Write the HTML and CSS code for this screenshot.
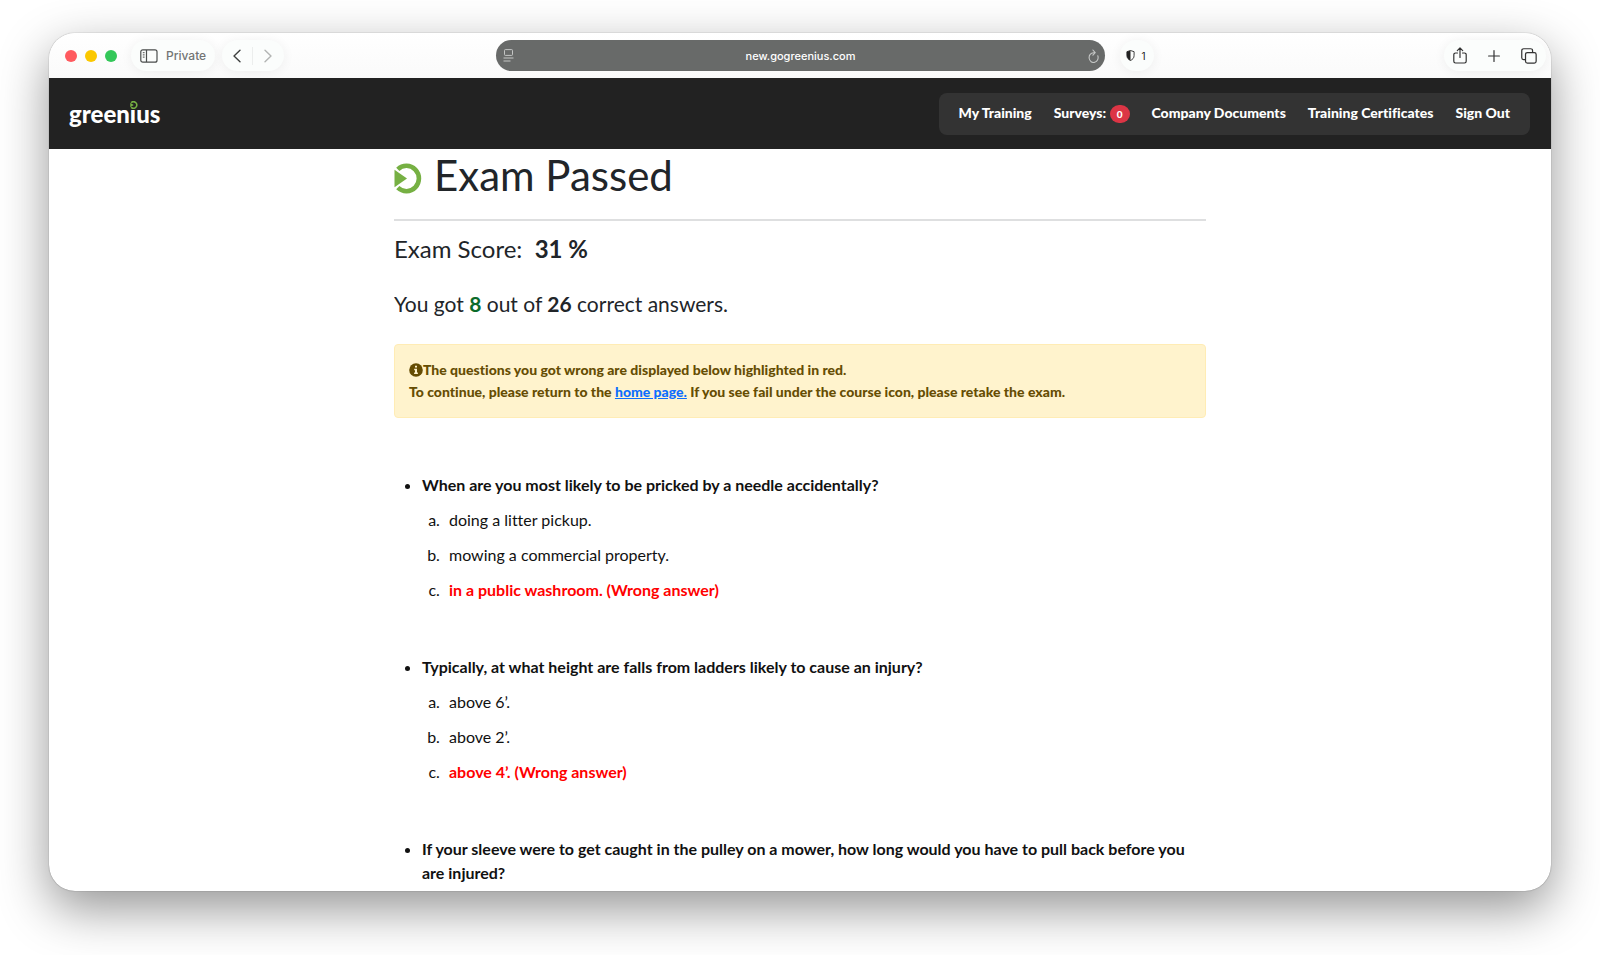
FILE: index.html
```html
<!DOCTYPE html>
<html lang="en">
<head>
<meta charset="utf-8">
<title>Greenius – Exam Passed</title>
<link rel="stylesheet" href="styles.css">
</head>
<body>
<div class="window">
  <div class="toolbar">
    <div class="toolbar-left">
      <div class="lights"><span class="light red"></span><span class="light yellow"></span><span class="light green"></span></div>
      <button class="pill private" type="button">
        <svg width="18" height="14" viewBox="0 0 18 14" fill="none" stroke="#4b4d4c" stroke-width="1.2"><rect x=".8" y=".8" width="16.2" height="12.4" rx="2"/><path d="M6.5 1v12"/><path d="M2.8 3.7h1.8M2.8 5.9h1.8M2.8 8.1h1.8" stroke-width="1"/></svg>
        <span>Private</span>
      </button>
      <div class="pill history">
        <button type="button" aria-label="Back"><svg width="8" height="14" viewBox="0 0 8 14" fill="none" stroke="#3f4140" stroke-width="1.4" stroke-linecap="round" stroke-linejoin="round"><path d="M7 1.2 1 7l6 5.8"/></svg></button>
        <span class="divider"></span>
        <button type="button" aria-label="Forward"><svg width="8" height="14" viewBox="0 0 8 14" fill="none" stroke="#b3b5b4" stroke-width="1.4" stroke-linecap="round" stroke-linejoin="round"><path d="m1 1.2 6 5.8-6 5.8"/></svg></button>
      </div>
    </div>
    <div class="address">
      <button type="button" aria-label="Reader"><svg width="11" height="13" viewBox="0 0 11 13" fill="none" stroke="#c4c6c5" stroke-width="1"><rect x="1.5" y=".6" width="8" height="5.8" rx=".8"/><path d="M.5 9h10M.5 12h7"/></svg></button>
      <input type="text" aria-label="Address" value="new.gogreenius.com">
      <button type="button" aria-label="Reload"><svg width="11" height="14" viewBox="0 0 11 14" fill="none" stroke="#c4c6c5" stroke-width="1.1" stroke-linecap="round" stroke-linejoin="round"><path d="M9.800 6.800A4.500 4.900 0 1 1 5.500 3.700H7M4.900 1l2.300 2.700L4.900 6.200"/></svg></button>
    </div>
    <div class="toolbar-right">
      <button class="pill shield" type="button"><svg width="9" height="11" viewBox="0 0 10 11" preserveAspectRatio="none"><path d="M5 .5 9 1.700V5.500c0 2.500-1.700 4-4 5-2.300-1-4-2.500-4-5V1.700z" fill="none" stroke="#222" stroke-width=".9"/><path d="M5 .5v10c-2.300-1-4-2.500-4-5V1.700z" fill="#222"/></svg><span>1</span></button>
      <div class="pill actions">
        <button type="button" aria-label="Share"><svg width="14" height="17" viewBox="0 0 14 17" fill="none" stroke="#333" stroke-width="1.2" stroke-linecap="round" stroke-linejoin="round"><path d="M4.500 6H2.500A1.700 1.700 0 0 0 .8 7.700v6.600A1.700 1.700 0 0 0 2.500 16h9a1.700 1.700 0 0 0 1.700-1.700V7.700A1.700 1.700 0 0 0 11.500 6h-2M7 10.500V1M4.300 3.600 7 .9l2.700 2.700"/></svg></button>
        <button type="button" aria-label="New tab"><svg width="12" height="12" viewBox="0 0 12 12" stroke="#333" stroke-width="1.200" stroke-linecap="round"><path d="M6 .6v10.800M.6 6h10.800"/></svg></button>
        <button type="button" aria-label="Tab overview"><svg width="16" height="16" viewBox="0 0 17 17" fill="none" stroke="#333" stroke-width="1.300" stroke-linejoin="round"><rect x="4.800" y="4.800" width="11.300" height="11.300" rx="2"/><path d="M12.300 4.500V2.800a2 2 0 0 0-2-2H2.800a2 2 0 0 0-2 2v7.500a2 2 0 0 0 2 2h1.700"/></svg></button>
      </div>
    </div>
  </div>

  <header class="site-header">
    <a class="logo" href="#" aria-label="greenius">green<span class="logo-i">ı<svg class="logo-dot" width="8" height="8" viewBox="0 0 30 30"><path d="M4 6A13 12 0 1 1 4 24" fill="none" stroke="#76b043" stroke-width="6"/><path d="M1 7l13 8L1 23z" fill="#76b043"/></svg></span>us</a>
    <nav class="site-nav">
      <a href="#">My Training</a>
      <a href="#">Surveys: <span class="badge">0</span></a>
      <a href="#">Company Documents</a>
      <a href="#">Training Certificates</a>
      <a href="#">Sign Out</a>
    </nav>
  </header>

  <main class="content">
    <h1><svg width="28" height="31" viewBox="0 0 28 31"><path d="M3.800 6.300A12.500 12.700 0 1 1 3.800 24.700" fill="none" stroke="#76b043" stroke-width="4.600"/><path d="M.5 6.800 13 15.500.5 24.200z" fill="#76b043" stroke="#fff" stroke-width="2" paint-order="stroke"/></svg><span>Exam Passed</span></h1>
    <hr>
    <p class="score">Exam Score:&nbsp; <strong>31 %</strong></p>
    <p class="summary">You got <strong class="correct">8</strong> out of <strong>26</strong> correct answers.</p>
    <div class="alert">
      <svg width="14" height="14" viewBox="0 0 14 14"><circle cx="7" cy="7" r="6.800" fill="#664d03"/><path d="M6 2.800h2v1.800H6zM5.200 5.800H8v3.800h.9V11H5.100V9.600H6V7.200h-.8z" fill="#fff3cd"/></svg>The questions you got wrong are displayed below highlighted in red.<br>
      To continue, please return to the <a href="#">home page.</a> If you see fail under the course icon, please retake the exam.
    </div>
    <ul class="questions">
      <li><strong>When are you most likely to be pricked by a needle accidentally?</strong>
        <ol><li>doing a litter pickup.</li><li>mowing a commercial property.</li><li><span class="wrong">in a public washroom. (Wrong answer)</span></li></ol></li>
      <li><strong>Typically, at what height are falls from ladders likely to cause an injury?</strong>
        <ol><li>above 6’.</li><li>above 2’.</li><li><span class="wrong">above 4’. (Wrong answer)</span></li></ol></li>
      <li><strong>If your sleeve were to get caught in the pulley on a mower, how long would you have to pull back before you are injured?</strong></li>
    </ul>
  </main>
</div>
</body>
</html>
```

FILE: styles.css
```css
* { box-sizing: border-box; }
body {
  margin: 0;
  height: 100vh;
  padding: 33px 49px 64px;
  background: #fff;
  color: #212529;
  font-family: Lato, "Open Sans", sans-serif;
  font-size: 16px;
  line-height: 24px;
  font-variant-ligatures: none;
  overflow: hidden;
}
button { border: 0; padding: 0; background: none; font: inherit; color: inherit; display: flex; align-items: center; }
svg { flex: none; }

.window {
  height: 100%;
  display: flex;
  flex-direction: column;
  border-radius: 26px;
  overflow: hidden;
  background: #fff;
  box-shadow: 0 0 1px rgba(0,0,0,.6), 0 18px 50px rgba(0,0,0,.42);
}

.toolbar {
  flex: none;
  display: grid;
  grid-template-columns: 1fr 609px 1fr;
  align-items: center;
  height: 45px;
  background: linear-gradient(#fff, #fafafa);
  font-family: Inter, sans-serif;
}
.toolbar-left, .toolbar-right { display: flex; align-items: center; }
.toolbar-left { gap: 7px; padding-left: 16px; }
.toolbar-right { justify-content: space-between; padding: 0 5px 0 15px; }
.lights { display: flex; gap: 8px; margin-right: 7px; }
.light { width: 12px; height: 12px; border-radius: 50%; }
.red { background: #ff5a5f; }
.yellow { background: #fbc800; }
.green { background: #34c759; }
.pill { display: flex; align-items: center; height: 31px; border-radius: 16px; background: #fbfdfc; box-shadow: 0 1px 12px rgba(0,0,0,.06); }
.private { gap: 8px; padding: 0 9px; font-size: 12px; font-weight: 500; color: #737574; }
.history { gap: 11px; padding: 0 12px 0 11px; }
.divider { width: 1px; height: 18px; background: #eceeed; }
.address { display: flex; align-items: center; height: 31px; padding: 0 6px 0 7px; border-radius: 16px; background: #686a69; }
.address input { flex: 1; min-width: 0; border: 0; padding: 0; background: none; color: #fff; font: 500 11px/16px Inter, sans-serif; text-align: center; }
.pill.shield { gap: 7px; padding: 0 8px 0 6px; font-size: 10px; color: #222; }
.actions { gap: 21px; padding: 0 9px; }

.site-header {
  flex: none;
  display: flex;
  align-items: center;
  justify-content: space-between;
  height: 71px;
  padding: 0 21px 0 20px;
  background: #222;
}
.logo { color: #fff; font-size: 24px; font-weight: 900; text-decoration: none; }
.logo-i { position: relative; }
.logo-dot { position: absolute; left: 0; top: 2px; }
.site-nav { display: flex; gap: 22px; padding: 8px 20px 10px; border-radius: 8px; background: #333; }
.site-nav a { color: #fff; font-size: 14px; font-weight: 900; text-decoration: none; }
.badge { display: inline-block; width: 20px; line-height: 18px; border-radius: 9px; background: #dc3545; font-size: 10px; text-align: center; }

.content { flex: 1; min-height: 0; overflow: hidden; width: 812px; max-width: 100%; margin: 0 auto; }
h1 { display: flex; align-items: center; gap: 12px; margin: 2px 0 20px; font-size: 42px; line-height: 48px; font-weight: 400; }
h1 svg { margin-top: 6px; }
hr { height: 2px; margin: 0; border: 0; background: #dedfe0; }
p { margin: 0; }
.score { margin-top: 13px; font-size: 24px; line-height: 29px; }
.summary { margin-top: 29px; font-size: 21px; line-height: 24px; }
.correct { color: #0b6b2b; }
.alert { margin-top: 28px; padding: 14px; border: 1px solid #ffecb5; border-radius: 4px; background: #fff3cd; color: #664d03; font-size: 14px; line-height: 22px; font-weight: 900; }
.alert svg { vertical-align: -2px; }
.alert a { color: #0d6efd; }

.questions { margin: 55px 0 0; padding-left: 28px; color: #111; }
.questions > li { margin-bottom: 53px; }
ol { margin: 11px 0 0; padding-left: 22px; list-style: lower-alpha; }
ol li { margin-bottom: 11px; padding-left: 5px; }
.wrong { color: #f00; font-weight: 700; }
```
